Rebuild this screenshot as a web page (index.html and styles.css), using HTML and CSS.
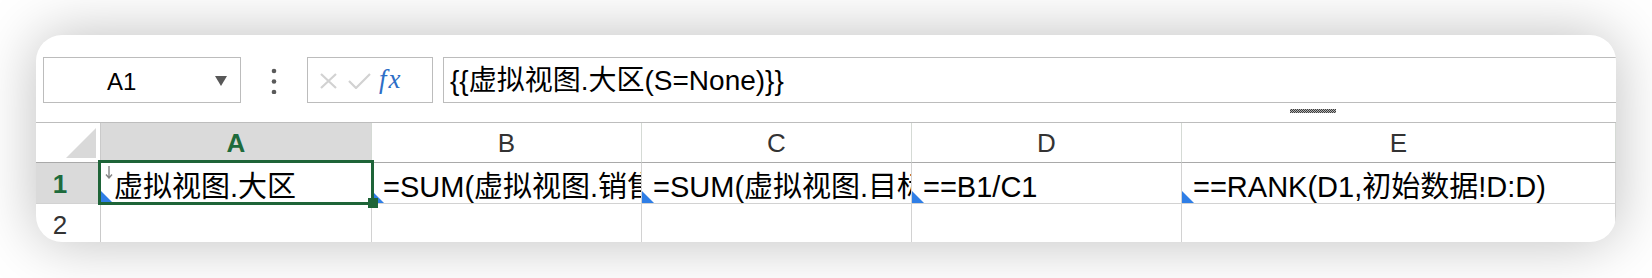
FILE: index.html
```html
<!DOCTYPE html>
<html lang="zh-CN">
<head>
<meta charset="utf-8">
<title>Sheet</title>
<link rel="stylesheet" href="styles.css">
</head>
<body>
<div class="card">
  <div class="toolbar">
    <div class="fbar">
      <div class="namebox">
        <span class="ref">A1</span>
        <svg class="caret" width="12" height="10" viewBox="0 0 12 10"><polygon points="0,0 12,0 6,10" fill="#585858"/></svg>
      </div>
      <div class="vdots">
        <svg width="6" height="26" viewBox="0 0 6 26"><circle cx="3" cy="3" r="2.3" fill="#5a5a5a"/><circle cx="3" cy="13.5" r="2.3" fill="#5a5a5a"/><circle cx="3" cy="24" r="2.3" fill="#5a5a5a"/></svg>
      </div>
      <div class="fxbox">
        <svg class="ico-x" width="17" height="16" viewBox="0 0 17 16"><path d="M1 1 L16 15 M16 1 L1 15" stroke="#d2d2d2" stroke-width="2.2" fill="none"/></svg>
        <svg class="ico-ok" width="23" height="16" viewBox="0 0 23 16"><path d="M1 8 L8 15 L22 1" stroke="#d2d2d2" stroke-width="2.2" fill="none"/></svg>
        <span class="fx">fx</span>
      </div>
      <div class="formula">{{虚拟视图.大区(S=None)}}</div>
    </div>
    <div class="splitter"><span class="grip"></span></div>
  </div>
  <div class="sheet">
    <div class="corner"><svg width="30" height="30" viewBox="0 0 30 30"><polygon points="30,0 30,30 0,30" fill="#d9d9d9"/></svg></div>
    <div class="colhead sel">A</div>
    <div class="colhead">B</div>
    <div class="colhead">C</div>
    <div class="colhead">D</div>
    <div class="colhead">E</div>

    <div class="rowhead sel">1</div>
    <div class="cell active">
      <svg class="drop" width="8" height="13" viewBox="0 0 8 13"><path d="M4 0 V12 M1 8.5 L4 12 L7 8.5" stroke="#858585" stroke-width="1.4" fill="none"/></svg>
      <span class="tri"></span>
      <span class="txt first">虚拟视图.大区</span>
      <span class="selbox"><span class="handle"></span></span>
    </div>
    <div class="cell"><span class="tri"></span><span class="txt">=SUM(虚拟视图.销售额)</span></div>
    <div class="cell"><span class="tri"></span><span class="txt">=SUM(虚拟视图.目标额)</span></div>
    <div class="cell"><span class="tri"></span><span class="txt">==B1/C1</span></div>
    <div class="cell"><span class="tri"></span><span class="txt">==RANK(D1,初始数据!D:D)</span></div>

    <div class="rowhead">2</div>
    <div class="cell"></div>
    <div class="cell"></div>
    <div class="cell"></div>
    <div class="cell"></div>
    <div class="cell"></div>
  </div>
</div>
</body>
</html>
```

FILE: styles.css
```css
* { box-sizing: border-box; }

html, body {
  margin: 0;
  background: #ffffff;
}

body {
  width: 1652px;
  height: 278px;
  padding: 35px 36px 36px;
  font-family: "Liberation Sans", "Noto Sans CJK SC", sans-serif;
  color: #111;
  overflow: hidden;
}

.card {
  width: 1580px;
  height: 207px;
  background: #fff;
  border-radius: 26px;
  box-shadow: 0 0 60px rgba(0, 0, 0, 0.26);
  overflow: hidden;
}

/* ---------- toolbar ---------- */
.toolbar {
  height: 87px;
  padding-top: 22px;
  padding-left: 7px;
}

.fbar {
  display: flex;
  height: 46px;
}

.namebox {
  width: 198px;
  height: 46px;
  border: 1px solid #bcbcbc;
  display: flex;
  align-items: center;
  padding-left: 63px;
}

.namebox .ref {
  font-size: 24px;
  line-height: 28px;
  padding-top: 3px;
  color: #000;
}

.namebox .caret {
  margin-left: 79px;
  margin-top: 2px;
}

.vdots {
  width: 66px;
  display: flex;
  align-items: center;
  justify-content: center;
  padding-top: 2px;
}

.fxbox {
  width: 126px;
  height: 46px;
  border: 1px solid #bcbcbc;
  display: flex;
  align-items: center;
  padding-left: 12px;
}

.fxbox .ico-x { margin-top: 1px; }
.fxbox .ico-ok { margin-left: 11px; margin-top: 1px; }

.fxbox .fx {
  margin-left: 8px;
  font-family: "Liberation Serif", "DejaVu Serif", serif;
  font-style: italic;
  font-size: 27px;
  letter-spacing: 2px;
  line-height: 30px;
  color: #2d6ec6;
  padding-bottom: 2px;
}

.formula {
  flex: 1;
  margin-left: 10px;
  margin-right: -20px;
  height: 46px;
  border: 1px solid #bcbcbc;
  font-size: 28px;
  line-height: 40px;
  padding-top: 3px;
  padding-left: 6px;
  color: #000;
  white-space: nowrap;
  overflow: hidden;
}

.splitter {
  height: 19px;
  padding-top: 6px;
  padding-left: 1247px;
}

.grip {
  display: block;
  width: 46px;
  height: 4px;
  background: repeating-conic-gradient(#3c3c3c 0 25%, #b4b4b4 0 50%) 0 0 / 2px 2px;
}

/* ---------- sheet ---------- */
.sheet {
  display: grid;
  grid-template-columns: 65px 271px 270px 270px 270px 1fr;
  grid-template-rows: 40px 41px 40px;
  border-top: 1px solid #bdbdbd;
}

.corner {
  border-right: 1px solid #cacaca;
  border-bottom: 1px solid #a9a9a9;
  display: flex;
  justify-content: flex-end;
  align-items: flex-end;
  padding: 0 4px 4px 0;
}

.corner svg { display: block; }

.colhead {
  border-right: 1px solid #d5dad5;
  border-bottom: 1px solid #a9a9a9;
  text-align: center;
  font-size: 26px;
  line-height: 28px;
  padding-top: 6px;
  color: #333;
}

.colhead.sel {
  background: #dadada;
  color: #1e6b3c;
  font-weight: bold;
}

.rowhead {
  border-right: 1px solid #cacaca;
  border-bottom: 1px solid #d2d2d2;
  text-align: center;
  padding-right: 16px;
  font-size: 26px;
  line-height: 28px;
  padding-top: 7px;
  color: #333;
}

.rowhead.sel {
  background: #dadada;
  color: #1e6b3c;
  font-weight: bold;
}

.cell {
  position: relative;
  border-right: 1px solid #d2d2d2;
  border-bottom: 1px solid #d2d2d2;
  font-size: 29px;
  line-height: 32px;
  padding-top: 8px;
  color: #000;
}

.cell .txt {
  display: block;
  white-space: nowrap;
  overflow: hidden;
  padding-left: 11px;
}

.cell .txt.first { padding-left: 13px; }

.tri {
  position: absolute;
  left: 0;
  bottom: 0;
  width: 12px;
  height: 12px;
  background: #2f7ee6;
  clip-path: polygon(0 0, 0 100%, 100% 100%);
}

.drop {
  position: absolute;
  left: 4px;
  top: 3px;
}

.selbox {
  position: absolute;
  left: -3px;
  top: -3px;
  width: 276px;
  height: 45px;
  border: 3px solid #1e6438;
  z-index: 3;
}

.handle {
  position: absolute;
  right: -7px;
  bottom: -6px;
  width: 10px;
  height: 10px;
  background: #1e6438;
}
```
